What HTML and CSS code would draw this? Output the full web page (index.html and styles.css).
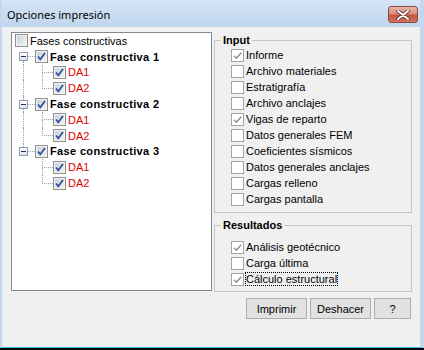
FILE: index.html
```html
<!DOCTYPE html>
<html lang="es">
<head>
    <meta charset="UTF-8">
    <title>Opciones impresión</title>
    <link rel="stylesheet" href="styles.css">
</head>
<body>
    <div class="window">
        <div class="titlebar">
            <span class="title">Opciones impresión</span>
            <span class="close">
                <svg width="14" height="10" viewBox="0 0 14 10">
                    <path d="M2 1 L12 9 M12 1 L2 9" stroke="#5b3530" stroke-width="3.6" stroke-linecap="round" fill="none"/>
                    <path d="M2 1 L12 9 M12 1 L2 9" stroke="#fff" stroke-width="2" stroke-linecap="round" fill="none"/>
                </svg>
            </span>
        </div>
        <div class="main">
            <div class="tree">
                <div class="trow root">
                    <span class="tcb"></span><span class="tl">Fases constructivas</span>
                </div>

                <!-- fase 1 -->
                <div class="trow">
                    <span class="ind7"></span>
                    <span class="col9"><span class="seg"></span><span class="exp"><i></i></span><span class="seg ln"></span></span>
                    <span class="hl7"></span>
                    <span class="tcb on"><svg width="11" height="11" viewBox="0 0 11 11"><path d="M2 5.5 L4.3 8.3 L9 2" /></svg></span>
                    <span class="tl bold">Fase constructiva 1</span>
                </div>
                <div class="trow">
                    <span class="ind7"></span><span class="col9"><span class="seg ln"></span></span><span class="ind10"></span>
                    <span class="branch"><span class="bt"></span><span class="bb ln"></span></span>
                    <span class="tcb on"><svg width="11" height="11" viewBox="0 0 11 11"><path d="M2 5.5 L4.3 8.3 L9 2" /></svg></span>
                    <span class="tl red">DA1</span>
                </div>
                <div class="trow">
                    <span class="ind7"></span><span class="col9"><span class="seg ln"></span></span><span class="ind10"></span>
                    <span class="branch"><span class="bt"></span><span class="bb"></span></span>
                    <span class="tcb on"><svg width="11" height="11" viewBox="0 0 11 11"><path d="M2 5.5 L4.3 8.3 L9 2" /></svg></span>
                    <span class="tl red">DA2</span>
                </div>

                <!-- fase 2 -->
                <div class="trow">
                    <span class="ind7"></span>
                    <span class="col9"><span class="seg ln"></span><span class="exp"><i></i></span><span class="seg ln"></span></span>
                    <span class="hl7"></span>
                    <span class="tcb on"><svg width="11" height="11" viewBox="0 0 11 11"><path d="M2 5.5 L4.3 8.3 L9 2" /></svg></span>
                    <span class="tl bold">Fase constructiva 2</span>
                </div>
                <div class="trow">
                    <span class="ind7"></span><span class="col9"><span class="seg ln"></span></span><span class="ind10"></span>
                    <span class="branch"><span class="bt"></span><span class="bb ln"></span></span>
                    <span class="tcb on"><svg width="11" height="11" viewBox="0 0 11 11"><path d="M2 5.5 L4.3 8.3 L9 2" /></svg></span>
                    <span class="tl red">DA1</span>
                </div>
                <div class="trow">
                    <span class="ind7"></span><span class="col9"><span class="seg ln"></span></span><span class="ind10"></span>
                    <span class="branch"><span class="bt"></span><span class="bb"></span></span>
                    <span class="tcb on"><svg width="11" height="11" viewBox="0 0 11 11"><path d="M2 5.5 L4.3 8.3 L9 2" /></svg></span>
                    <span class="tl red">DA2</span>
                </div>

                <!-- fase 3 -->
                <div class="trow">
                    <span class="ind7"></span>
                    <span class="col9"><span class="seg ln"></span><span class="exp"><i></i></span><span class="seg"></span></span>
                    <span class="hl7"></span>
                    <span class="tcb on"><svg width="11" height="11" viewBox="0 0 11 11"><path d="M2 5.5 L4.3 8.3 L9 2" /></svg></span>
                    <span class="tl bold">Fase constructiva 3</span>
                </div>
                <div class="trow">
                    <span class="ind7"></span><span class="col9"></span><span class="ind10"></span>
                    <span class="branch"><span class="bt"></span><span class="bb ln"></span></span>
                    <span class="tcb on"><svg width="11" height="11" viewBox="0 0 11 11"><path d="M2 5.5 L4.3 8.3 L9 2" /></svg></span>
                    <span class="tl red">DA1</span>
                </div>
                <div class="trow">
                    <span class="ind7"></span><span class="col9"></span><span class="ind10"></span>
                    <span class="branch"><span class="bt"></span><span class="bb"></span></span>
                    <span class="tcb on"><svg width="11" height="11" viewBox="0 0 11 11"><path d="M2 5.5 L4.3 8.3 L9 2" /></svg></span>
                    <span class="tl red">DA2</span>
                </div>
            </div>

            <div class="side">
                <fieldset class="group input">
                    <legend>Input</legend>
                    <div class="opts">
                        <div class="opt"><span class="cb on"><svg width="11" height="11" viewBox="0 0 11 11"><path d="M2 5.8 L4.4 8.2 L9.2 2.8" /></svg></span><span>Informe</span></div>
                        <div class="opt"><span class="cb"></span><span>Archivo materiales</span></div>
                        <div class="opt"><span class="cb"></span><span>Estratigrafía</span></div>
                        <div class="opt"><span class="cb"></span><span>Archivo anclajes</span></div>
                        <div class="opt"><span class="cb on"><svg width="11" height="11" viewBox="0 0 11 11"><path d="M2 5.8 L4.4 8.2 L9.2 2.8" /></svg></span><span>Vigas de reparto</span></div>
                        <div class="opt"><span class="cb"></span><span>Datos generales FEM</span></div>
                        <div class="opt"><span class="cb"></span><span>Coeficientes sísmicos</span></div>
                        <div class="opt"><span class="cb"></span><span>Datos generales anclajes</span></div>
                        <div class="opt"><span class="cb"></span><span>Cargas relleno</span></div>
                        <div class="opt"><span class="cb"></span><span>Cargas pantalla</span></div>
                    </div>
                </fieldset>

                <fieldset class="group results">
                    <legend>Resultados</legend>
                    <div class="opts">
                        <div class="opt"><span class="cb on"><svg width="11" height="11" viewBox="0 0 11 11"><path d="M2 5.8 L4.4 8.2 L9.2 2.8" /></svg></span><span>Análisis geotécnico</span></div>
                        <div class="opt"><span class="cb"></span><span>Carga última</span></div>
                        <div class="opt"><span class="cb on"><svg width="11" height="11" viewBox="0 0 11 11"><path d="M2 5.8 L4.4 8.2 L9.2 2.8" /></svg></span><span class="focus">Cálculo estructural</span></div>
                    </div>
                </fieldset>

                <div class="buttons">
                    <button class="btn">Imprimir</button>
                    <button class="btn">Deshacer</button>
                    <button class="btn small">?</button>
                </div>
            </div>
        </div>
    </div>
</body>
</html>
```

FILE: styles.css
```css
body {
    margin: 0;
    background-color: #000;
    font-family: "Liberation Sans", Arial, sans-serif;
    font-size: 11px;
    color: #000;
}
.window {
    width: 424px;
    height: 348px;
    box-sizing: border-box;
    background-color: #f0f0f0;
    border-left: 2px solid #c4d7ed;
    border-right: 4px solid #c4d7ed;
    border-bottom: 1px solid #3cb8e4;
    display: flex;
    flex-direction: column;
}
.titlebar {
    height: 27px;
    flex: none;
    display: flex;
    align-items: center;
    padding: 2px 0 0 5px;
    box-sizing: border-box;
    background: linear-gradient(#d6e5f6, #bfd5ed);
}
.title {
    font-family: "Noto Sans", sans-serif;
    font-size: 11px;
}
.close {
    margin-left: auto;
    margin-right: 2px;
    width: 30px;
    height: 17px;
    box-sizing: border-box;
    border: 1px solid #8d4a43;
    border-radius: 3px;
    background: linear-gradient(#e9b4a8, #d9907f 45%, #c6543f 55%, #d27562);
    display: flex;
    align-items: center;
    justify-content: center;
}
.main {
    display: flex;
    padding: 5px 0 0 9px;
    gap: 2px;
}

/* tree */
.tree {
    width: 201px;
    height: 259px;
    box-sizing: border-box;
    border: 1px solid #828790;
    background-color: #fff;
}
.trow {
    height: 15.8px;
    display: flex;
    align-items: stretch;
}
.trow.root {
    padding-left: 3px;
}
.ind7 { width: 7px; flex: none; }
.ind10 { width: 10px; flex: none; }
.col9 {
    width: 9px;
    flex: none;
    display: flex;
    flex-direction: column;
}
.seg { flex: 1; }
.ln {
    margin-left: 4px;
    border-left: 1px dotted #a0a0a0;
}
.exp {
    width: 9px;
    height: 9px;
    flex: none;
    box-sizing: border-box;
    border: 1px solid #8e9db5;
    background: linear-gradient(#fff, #dde3eb);
    display: flex;
    align-items: center;
    justify-content: center;
}
.exp i {
    width: 5px;
    height: 1px;
    background-color: #1f3160;
}
.hl7 {
    width: 7px;
    flex: none;
    align-self: center;
    border-top: 1px dotted #a0a0a0;
}
.branch {
    width: 15px;
    flex: none;
    display: flex;
    flex-direction: column;
}
.bt {
    flex: 1;
    margin-left: 4px;
    border-left: 1px dotted #a0a0a0;
    border-bottom: 1px dotted #a0a0a0;
}
.bb { flex: 1; }
.tcb {
    width: 13px;
    height: 13px;
    flex: none;
    align-self: center;
    box-sizing: border-box;
    border: 1px solid #8f8f8f;
    box-shadow: inset 0 0 0 1px #f4f4f4;
    background: linear-gradient(135deg, #c9ced4, #f6f6f6);
    display: flex;
    align-items: center;
    justify-content: center;
}
.tcb svg path {
    fill: none;
    stroke: #2f4f9e;
    stroke-width: 1.7;
}
.tl {
    margin-left: 1px;
    padding-left: 1px;
    align-self: center;
    white-space: nowrap;
}
.tl.bold {
    font-weight: bold;
    letter-spacing: 0.35px;
}
.tl.red { color: #e00000; }

/* right column */
.side {
    width: 198px;
    margin-top: 2px;
    display: flex;
    flex-direction: column;
}
.group {
    margin: 0;
    min-width: 0;
    padding: 0 0 5px 6px;
    border: 1px solid #c6c6c6;
}
.group legend {
    padding: 0 2px;
    font-weight: bold;
    line-height: 13px;
}
.results {
    margin-top: 6px;
    padding-top: 7px;
    padding-bottom: 4px;
}
.opts {
    padding-left: 10px;
}
.opt {
    height: 16px;
    display: flex;
    align-items: center;
    white-space: nowrap;
}
.cb {
    width: 13px;
    height: 13px;
    flex: none;
    box-sizing: border-box;
    border: 1px solid #a3a3a3;
    background-color: #fff;
    margin-right: 2px;
    display: flex;
    align-items: center;
    justify-content: center;
}
.cb svg path {
    fill: none;
    stroke: #8c8c8c;
    stroke-width: 1.4;
}
.focus {
    outline: 1px dotted #000;
    line-height: 12px;
}
.buttons {
    display: flex;
    justify-content: flex-end;
    gap: 3px;
    margin-top: 6px;
    padding-right: 1px;
}
.btn {
    width: 61px;
    height: 21px;
    padding: 0;
    border: 1px solid #adadad;
    background-color: #e1e1e1;
    font-family: "Liberation Sans", Arial, sans-serif;
    font-size: 11px;
    color: #000;
}
.btn.small {
    width: 37px;
}
```
